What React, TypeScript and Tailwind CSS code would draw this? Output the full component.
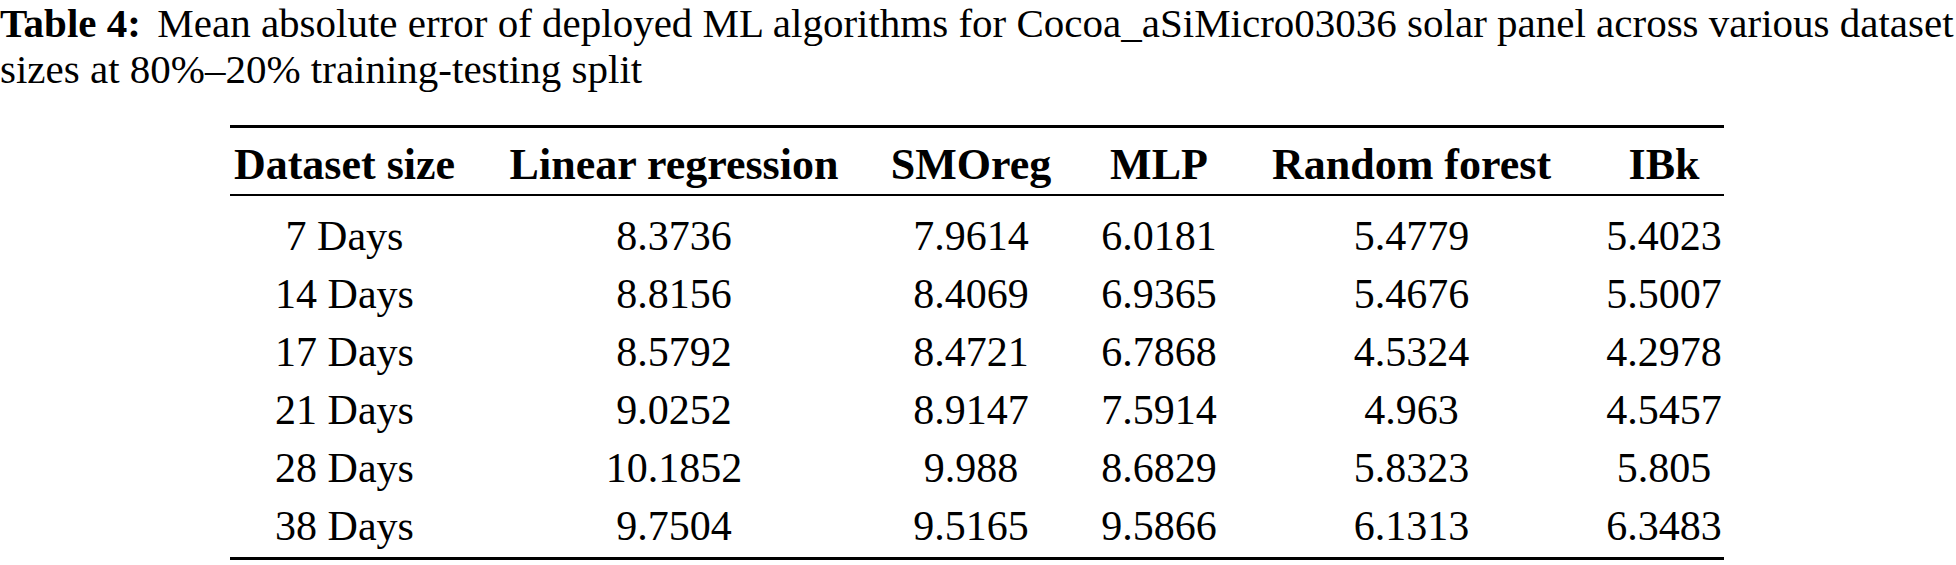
const headers = ['Dataset size', 'Linear regression', 'SMOreg', 'MLP', 'Random forest', 'IBk']

const rows = [
  ['7 Days', '8.3736', '7.9614', '6.0181', '5.4779', '5.4023'],
  ['14 Days', '8.8156', '8.4069', '6.9365', '5.4676', '5.5007'],
  ['17 Days', '8.5792', '8.4721', '6.7868', '4.5324', '4.2978'],
  ['21 Days', '9.0252', '8.9147', '7.5914', '4.963', '4.5457'],
  ['28 Days', '10.1852', '9.988', '8.6829', '5.8323', '5.805'],
  ['38 Days', '9.7504', '9.5165', '9.5866', '6.1313', '6.3483'],
]

// column widths picked so each column sits centred where the reference has it
const gridCols = 'grid grid-cols-[229px_318px_164px_100px_293px_100px] gap-x-[56px]'

export default function App() {
  return (
    <div className="h-[565px] w-[1956px] overflow-hidden bg-white text-black [font-family:'Liberation_Serif',serif]">
      <div className="text-[41px] leading-[46px]">
        <div className="whitespace-nowrap">
          <span className="font-bold">Table 4:</span>
          <span className="ml-[0.4em]">
            Mean absolute error of deployed ML algorithms for Cocoa_aSiMicro03036 solar panel across various dataset
          </span>
        </div>
        <div className="whitespace-nowrap">sizes at 80%–20% training-testing split</div>
      </div>

      <div className="mt-[33px] ml-[230px] w-[1494px] border-y-[3px] border-black">
        <div className={`${gridCols} h-[68px] border-b-2 border-black pt-[6px] text-[44px] leading-[62px] font-bold`}>
          {headers.map((h) => (
            <div key={h} className="flex justify-center whitespace-nowrap">
              {h}
            </div>
          ))}
        </div>
        <div className="pt-[11px] pb-[2px] text-[42px] leading-[58px]">
          {rows.map((r) => (
            <div key={r[0]} className={gridCols}>
              {r.map((v, i) => (
                <div key={i} className="flex justify-center whitespace-nowrap">
                  {v}
                </div>
              ))}
            </div>
          ))}
        </div>
      </div>
    </div>
  )
}
